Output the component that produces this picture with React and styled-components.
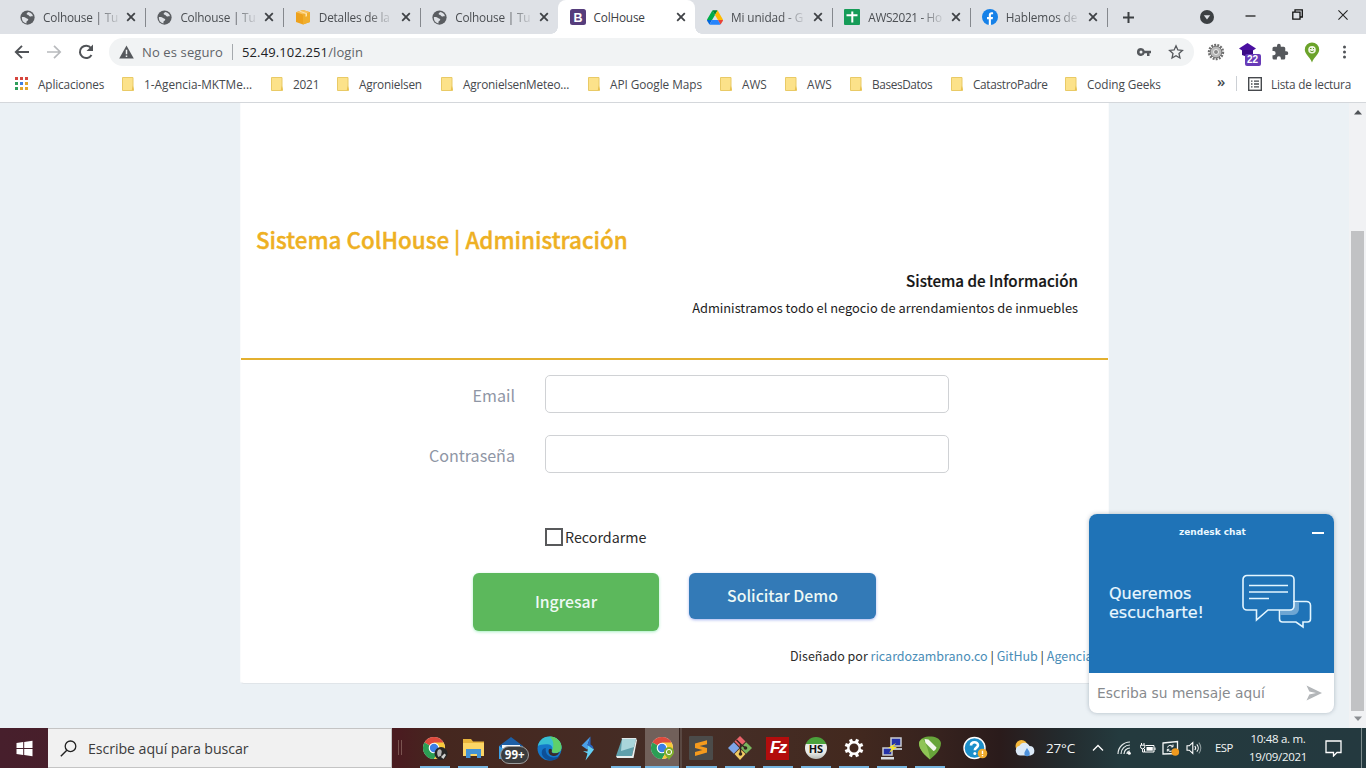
import React from "react";
import styled, { createGlobalStyle, css } from "styled-components";

const UI = `"Open Sans", "Noto Sans", sans-serif`;
const PAGE = `"Noto Sans CJK SC", "Open Sans", sans-serif`;

const Global = createGlobalStyle`
  *, *::before, *::after { box-sizing: border-box; }
  html, body { margin: 0; padding: 0; overflow: hidden; }
  body { width: 1366px; height: 768px; font-family: ${UI}; font-size: 12px; }
  svg { display: block; flex: none; }
  a { color: inherit; text-decoration: none; }
`;

const Screen = styled.div`
  position: relative;
  width: 1366px;
  height: 768px;
  display: flex;
  flex-direction: column;
  overflow: hidden;
  background: #fff;
`;

/* ---------- browser tabs ---------- */
const TabStrip = styled.div`
  height: 34px;
  flex: none;
  display: flex;
  align-items: stretch;
  padding-left: 8px;
  background: #dee1e6;
`;

const Tab = styled.div`
  position: relative;
  width: 137.4px;
  flex: none;
  display: flex;
  align-items: center;
  padding: 0 9px 0 12px;
  color: #4b4e52;
  ${(p) =>
    p.$active &&
    css`
      background: #fff;
      border-radius: 8px 8px 0 0;
      color: #3c4043;
      &::before {
        content: "";
        position: absolute;
        left: -7px;
        right: -7px;
        bottom: 0;
        height: 7px;
        background:
          radial-gradient(circle at 0 0, transparent 6.5px, #fff 7px) left / 7px 7px no-repeat,
          radial-gradient(circle at 100% 0, transparent 6.5px, #fff 7px) right / 7px 7px no-repeat;
      }
    `}
  ${(p) =>
    p.$divider &&
    css`
      &::after {
        content: "";
        position: absolute;
        right: -1px;
        top: 8px;
        width: 1px;
        height: 19px;
        background: #85888d;
      }
    `}
`;

const TabLabelBox = styled.div`
  flex: 1;
  display: flex;
  padding-left: 8px;
`;

const TabLabel = styled.span`
  white-space: nowrap;
  margin-top: -1px;
  font-size: 11.8px;
  letter-spacing: ${(p) => p.$ls || 0}px;
  ${(p) =>
    p.$fade &&
    css`
      mask-image: linear-gradient(90deg, #000 70%, rgba(0, 0, 0, 0.15) 100%);
    `}
`;

const StripTools = styled.div`
  display: flex;
  flex: 1;
  align-items: center;
  svg:nth-child(1) { margin-left: 15px; }
  svg:nth-child(2) { margin-left: 65px; }
  svg:nth-child(3) { margin-left: 31px; margin-top: -4px; }
  svg:nth-child(4) { margin-left: 36px; margin-top: -5px; }
  svg:nth-child(5) { margin-left: 34px; margin-top: -5px; }
`;

/* ---------- address bar ---------- */
const Toolbar = styled.div`
  height: 36px;
  flex: none;
  display: flex;
  align-items: center;
  padding-left: 13px;
  background: #fff;
`;

const NavButtons = styled.div`
  width: 96px;
  display: flex;
  align-items: center;
  gap: 14px;
`;

const Omnibox = styled.div`
  width: 1085px;
  height: 28px;
  border-radius: 14px;
  background: #f1f3f4;
  display: flex;
  align-items: center;
  padding: 0 10px;
`;

const Insecure = styled.span`
  width: 84px;
  margin-left: 8px;
  white-space: nowrap;
  font-size: 13px;
  letter-spacing: 0.12px;
  color: #5f6368;
`;

const OmniDivider = styled.span`
  width: 1px;
  height: 16px;
  margin: 0 9px 0 6px;
  background: #a5a9ad;
`;

const Url = styled.span`
  flex: 1;
  font-size: 13px;
  letter-spacing: 0.12px;
  color: #202124;
  i { font-style: normal; color: #5f6368; }
`;

const OmniIcons = styled.div`
  display: flex;
  align-items: center;
  gap: 16px;
`;

const Extensions = styled.div`
  display: flex;
  align-items: center;
  gap: 13.5px;
  margin-left: 13px;
`;

const ExtBadge = styled.div`
  position: relative;
  width: 19px;
  height: 18px;
  span {
    position: absolute;
    left: 6px;
    top: 11px;
    width: 16px;
    height: 12px;
    border-radius: 2px;
    background: #673ab7;
    color: #fff;
    font: 700 10px/12px "Liberation Sans", sans-serif;
    text-align: center;
  }
`;

/* ---------- bookmarks ---------- */
const Bookmarks = styled.div`
  height: 33px;
  flex: none;
  display: flex;
  align-items: center;
  padding: 0 0 5px 15px;
  border-bottom: 1px solid #d4d7db;
  background: #fff;
`;

const Bookmark = styled.div`
  width: ${(p) => p.$w}px;
  flex: none;
  display: flex;
  align-items: center;
  gap: ${(p) => p.$gap || 10}px;
  white-space: nowrap;
  font-size: 11.8px;
  letter-spacing: ${(p) => p.$ls || 0}px;
  color: #46494d;
`;

const More = styled.span`
  width: 19px;
  font-size: 15px;
  font-weight: 600;
  line-height: 1;
  margin-top: -4px;
  color: #46494d;
`;

const BarDivider = styled.span`
  width: 1px;
  height: 15px;
  margin-right: 11px;
  background: #ccd0d5;
`;

/* ---------- web page ---------- */
const Viewport = styled.div`
  height: 625px;
  flex: none;
  display: flex;
  background: #ebf1f5;
`;

const Content = styled.main`
  flex: 1;
  padding-left: 240px;
  overflow: hidden;
  font-family: ${PAGE};
`;

const Card = styled.section`
  width: 869px;
  height: 581px;
  background: #fff;
  border: 1px solid #fafbfc;
  border-bottom-color: #e0e5e9;
  border-top: 0;
  border-radius: 0 0 4px 4px;
`;

const CardHead = styled.header`
  height: 257px;
  padding: 118px 30px 0 15px;
  border-bottom: 2px solid #e3b02f;
`;

const Title = styled.h1`
  margin: 0;
  height: 36px;
  line-height: 36px;
  font-size: 22.4px;
  font-weight: 500;
  -webkit-text-stroke: 0.4px #eeb023;
  color: #eeb023;
  white-space: nowrap;
`;

const InfoTitle = styled.h2`
  margin: 11px 0 0;
  line-height: 24px;
  font-size: 15.2px;
  font-weight: 500;
  -webkit-text-stroke: 0.2px #151515;
  text-align: right;
  color: #151515;
`;

const InfoText = styled.p`
  margin: 5px 0 0;
  line-height: 22px;
  font-size: 12.83px;
  text-align: right;
  color: #1c1c1c;
`;

const Form = styled.form`
  padding-top: 15px;
`;

const Field = styled.label`
  height: 38px;
  margin-bottom: 22px;
  display: flex;
  align-items: center;
`;

const FieldName = styled.span`
  width: 274px;
  margin-right: 30px;
  padding-top: 1px;
  text-align: right;
  font-size: 16.1px;
  color: #8f96a5;
`;

const Input = styled.input`
  width: 404px;
  height: 38px;
  border: 1px solid #d0d2d5;
  border-radius: 5px;
  background: #fff;
`;

const Remember = styled.label`
  display: flex;
  align-items: center;
  height: 20px;
  margin: 54px 0 0 304px;
  gap: 2px;
  font-size: 14.3px;
  line-height: 20px;
  color: #2b2b2b;
`;

const Check = styled.span`
  width: 18px;
  height: 18px;
  border: 2px solid #58595b;
`;

const Actions = styled.div`
  display: flex;
  align-items: flex-start;
  gap: 30px;
  margin: 26px 0 0 232px;
`;

const Button = styled.button`
  width: ${(p) => p.$w}px;
  height: ${(p) => p.$h}px;
  padding: 0 0 1px;
  border: 0;
  border-radius: 6px;
  background: ${(p) => p.$bg};
  box-shadow: 0 1px 3px ${(p) => p.$glow};
  color: #eef9f5;
  font: 500 15.8px ${PAGE};
`;

const Credits = styled.p`
  margin: 14px 0 0 549px;
  line-height: 22px;
  font-size: 12.5px;
  white-space: nowrap;
  color: #2b2b2b;
  a { color: #4a8db7; }
`;

const ScrollTrack = styled.div`
  width: 17px;
  display: flex;
  flex-direction: column;
  align-items: center;
  background: #f1f2f4;
  padding: 6px 0 6px 0;
`;

const ScrollThumb = styled.div`
  width: 13px;
  height: 480px;
  margin-top: 116px;
  margin-bottom: 5px;
  background: #c1c2c4;
`;

/* ---------- chat widget ---------- */
const Chat = styled.aside`
  position: absolute;
  left: 1089px;
  top: 514px;
  width: 245px;
  height: 199px;
  border-radius: 8px;
  overflow: hidden;
  background: #fff;
  box-shadow: 0 0 4px rgba(60, 80, 100, 0.35);
  font-family: "DejaVu Sans", sans-serif;
`;

const ChatTop = styled.div`
  height: 159px;
  background: #1f73b7;
  color: #eaf8ff;
`;

const ChatBar = styled.div`
  height: 36px;
  display: flex;
  align-items: center;
  padding: 0 10px 0 90px;
  justify-content: space-between;
  font: 700 9px "DejaVu Sans", sans-serif;
`;

const Minimize = styled.span`
  width: 12px;
  height: 2px;
  margin-top: 2px;
  background: #fff;
`;

const ChatBody = styled.div`
  display: flex;
  justify-content: space-between;
  padding: 24px 21px 0 20px;
`;

const ChatPrompt = styled.p`
  margin: 10px 0 0;
  font-size: 16px;
  line-height: 19px;
  -webkit-text-stroke: 0.2px #eaf8ff;
`;

const ChatInput = styled.div`
  height: 40px;
  display: flex;
  align-items: center;
  justify-content: space-between;
  padding: 0 12px 0 8px;
  font-size: 13.8px;
  color: #878a8e;
`;

/* ---------- taskbar ---------- */
const Taskbar = styled.footer`
  height: 40px;
  flex: none;
  display: flex;
  background: linear-gradient(90deg, #471f2c 0, #4a1c20 400px, #45271f 440px, #452e27 700px, #43291f 850px, #36221e 940px, #2a1b1b 1000px, #232a2d 1060px, #243a3e 1120px, #24393f 1366px);
`;

const StartButton = styled.div`
  width: 48px;
  display: flex;
  align-items: center;
  justify-content: center;
`;

const Search = styled.div`
  width: 344px;
  display: flex;
  align-items: center;
  gap: 11px;
  padding: 0 12px 0;
  background: #f1f1f1;
  border: 1px solid #c4c4c4;
  border-left: 0;
  font-size: 14.2px;
  letter-spacing: -0.07px;
  color: #3c3c3c;
`;

const Grip = styled.div`
  width: 4px;
  height: 15px;
  margin: 12px 14px 0 6px;
  border: solid #7a5450;
  border-width: 0 1px;
`;

const TaskItem = styled.div`
  position: relative;
  width: ${(p) => p.$w || 38.2}px;
  height: 40px;
  display: flex;
  align-items: center;
  justify-content: center;
  flex: none;
  ${(p) =>
    p.$active &&
    css`
      background: linear-gradient(90deg, #71605a 0 34px, #34231f 34px 35px, #5a4842 35px);
    `}
  ${(p) =>
    p.$open &&
    css`
      &::after {
        content: "";
        position: absolute;
        left: ${p.$active ? 0 : 4}px;
        right: ${p.$active ? 3 : 4}px;
        bottom: 0;
        height: 2px;
        background: #76b5e0;
      }
    `}
`;

const MailCount = styled.span`
  position: absolute;
  left: 8px;
  top: 18px;
  width: 29px;
  height: 18px;
  border: 1px solid #9b9c9c;
  border-radius: 9px;
  background: #3b3c3d;
  color: #fff;
  font: 700 11.5px/16px "Open Sans", sans-serif;
  text-align: center;
`;

const Disc = styled.span`
  width: 22px;
  height: 22px;
  border-radius: 50%;
  background: linear-gradient(#4aa13b 0 30%, #e9ece9 34% 70%, #b8bcb8);
  color: #111;
  font: 700 11px/23px "Open Sans", sans-serif;
  text-align: center;
`;

const Fz = styled.span`
  width: 23px;
  height: 23px;
  background: #b30d0d;
  color: #fff;
  font: italic 700 17px/22px "Liberation Sans", sans-serif;
  letter-spacing: -1.5px;
  text-align: center;
`;

const Tray = styled.div`
  display: flex;
  align-items: center;
  flex: none;
  margin-left: auto;
  color: #f2f5f5;
`;

const TraySlot = styled.div`
  width: ${(p) => p.$w}px;
  display: flex;
  flex: none;
  justify-content: center;
  text-align: center;
  white-space: nowrap;
  font-size: ${(p) => p.$fs || 12}px;
  line-height: 18px;
  letter-spacing: ${(p) => p.$ls || 0}px;
`;

const PeekLine = styled.div`
  width: 5px;
  height: 40px;
  margin-left: 8px;
  border-left: 1px solid #7d8b8d;
`;

/* ---------- icons ---------- */
const Svg = ({ w = 16, h = w, vb = `0 0 ${w} ${h}`, children }) => (
  <svg width={w} height={h} viewBox={vb} fill="none">
    {children}
  </svg>
);

const Globe = () => (
  <Svg w={15} vb="0 0 16 16">
    <circle cx="8" cy="8" r="7.6" fill="#5a5d61" />
    <path d="M2 7.4c1.9-.2 3.7.1 4.600 1.200.8.9 2.300.6 2.200 1.900-.1 1.200-1.800 1-1.900 2.300l-.1 1.500A6.400 6.400 0 0 1 2 7.400z" fill="#dee1e6" />
    <path d="M8.600 2.200c-.4.900-1.700 1-1.500 2 .2 1 1.700.7 2.300 1.600.6 1 2 1.500 2.900.9.700-.5 1.200-.3 1.700.4A6.300 6.300 0 0 0 8.600 2.200z" fill="#dee1e6" />
  </Svg>
);

const Cube = () => (
  <Svg w={16}>
    <path d="M1 3.300 8 1l7 2.300v9.800L8 15.500l-7-2.400z" fill="#eda11c" />
    <path d="M1 3.300 8 5.500l7-2.200L8 1z" fill="#f8c15c" />
    <path d="M8 5.500v10l7-2.400V3.300z" fill="#f0ae2d" />
    <path d="M5.500 1.900 12 4.200v3l-1.500.5v-3L4 2.400z" fill="#fde3ac" />
  </Svg>
);

const BootstrapB = () => (
  <Svg w={16}>
    <rect width="16" height="16" rx="2.500" fill="#563d7c" />
    <text x="8" y="12.500" textAnchor="middle" fontFamily="Liberation Sans, sans-serif" fontWeight="700" fontSize="12.500" fill="#fff">B</text>
  </Svg>
);

const Drive = () => (
  <Svg w={16} h={15} vb="0 0 87.300 78">
    <path d="m6.600 66.850 3.850 6.650c.8 1.400 1.950 2.500 3.300 3.300l13.750-23.800H0c0 1.550.4 3.100 1.200 4.500z" fill="#0066da" />
    <path d="M43.650 25 29.900 1.200c-1.350.8-2.500 1.900-3.300 3.300L1.200 48.500A9.060 9.060 0 0 0 0 53h27.500z" fill="#00ac47" />
    <path d="M73.550 76.800c1.350-.8 2.500-1.900 3.300-3.300l1.600-2.750L86.100 57.500c.8-1.400 1.200-2.950 1.200-4.500H59.800l5.850 11.500z" fill="#ea4335" />
    <path d="M43.650 25 57.400 1.200C56.050.4 54.500 0 52.900 0H34.400c-1.600 0-3.150.45-4.500 1.200z" fill="#00832d" />
    <path d="M59.800 53H27.500L13.750 76.800c1.350.8 2.900 1.200 4.500 1.200h50.800c1.600 0 3.150-.45 4.500-1.200z" fill="#2684fc" />
    <path d="m73.400 26.500-12.700-22c-.8-1.400-1.950-2.500-3.300-3.300L43.650 25 59.800 53h27.450c0-1.550-.4-3.100-1.200-4.500z" fill="#ffba00" />
  </Svg>
);

const Sheets = () => (
  <Svg w={16}>
    <rect width="16" height="16" rx="1" fill="#169c58" />
    <path d="M8.300 2.500v11M2.500 6.300h11" stroke="#fff" strokeWidth="2" />
  </Svg>
);

const Facebook = () => (
  <Svg w={16}>
    <circle cx="8" cy="8" r="8" fill="#1681e8" />
    <path d="M6.800 16V10.300H5V8h1.800V6.300c0-2 1.100-3 2.800-3 .7 0 1.300.1 1.500.1v1.900h-1c-.9 0-1.200.5-1.200 1.200V8H11l-.3 2.300H8.900V16z" fill="#fff" />
  </Svg>
);

const Cross = ({ s = 8, c = "#3f4246", t = 1.8 }) => (
  <Svg w={s + 2} vb="0 0 10 10">
    <path d="m1.200 1.200 7.600 7.600m0-7.600L1.200 8.800" stroke={c} strokeWidth={t} />
  </Svg>
);

const Folder = () => (
  <Svg w={12} h={14}>
    <path d="M.5.500h10.500v8.500l.6 4.500H.5z" fill="#fce28a" stroke="#e9ca66" />
    <path d="m9.800 13 .9-4.500.8 4.500z" fill="#e9c04d" />
  </Svg>
);

const AppsGrid = () => (
  <Svg w={13}>
    {["#d6453d", "#d6453d", "#d6453d", "#2f9e5b", "#3f7fe0", "#e2a52c", "#2f9e5b", "#e2a52c", "#e2a52c"].map((c, i) => (
      <rect key={i} x={(i % 3) * 5} y={Math.floor(i / 3) * 5} width="3" height="3" fill={c} />
    ))}
  </Svg>
);

const ChromeArt = ({ children }) => (
  <Svg w={26} h={26}>
    <circle cx="12" cy="13" r="11" fill="#e8eaec" />
    <path d="M12 13 2.470 7.500A11 11 0 0 1 21.530 7.500z" fill="#dd4a3c" />
    <path d="M2.470 7.500A11 11 0 0 0 12 24l5-8.500L12 13z" fill="#2b9e54" />
    <path d="M21.530 7.500A11 11 0 0 1 12 24l4.800-8.300L12 7.500z" fill="#f8c93a" />
    <circle cx="12" cy="13" r="5.300" fill="#fff" />
    <circle cx="12" cy="13" r="4.200" fill="#3b7fe6" />
    {children}
  </Svg>
);

const apps = [
  { w: 38, open: true, art: (
    <ChromeArt>
      <circle cx="19" cy="18.500" r="6.500" fill="#262626" />
      <path d="M15.500 16c1-2.500 4-2 4.200.3.200 2-.8 2.500-.4 4.200l-3 1.500c-1-1.500-1.500-4-.8-6z" fill="#b5b5b5" />
      <path d="m19 22 3.500-3.500 1.500 1.500-2.500 4z" fill="#cfcfcf" />
    </ChromeArt>
  ) },
  { open: true, art: (
    <Svg w={23} h={22}>
      <path d="M1 2h8l2 2.500h11V19H1z" fill="#e8b43c" />
      <path d="M1 6h21v13H1z" fill="#fbd566" />
      <path d="M4 21v-9h15v9h-4v-4H8.500v4z" fill="#4393d6" />
    </Svg>
  ) },
  { art: (
    <>
      <Svg w={26} h={24}>
        <path d="M1 10 13 1l12 9v13H1z" fill="#1c5fa6" />
        <path d="M4 9h18v13H4z" fill="#f2f7fb" />
        <path d="m1 10 12 8 12-8v13H1z" fill="#3aa0e6" />
      </Svg>
      <MailCount>99+</MailCount>
    </>
  ) },
  { art: (
    <Svg w={25} h={25}>
      <circle cx="12.500" cy="12.500" r="12" fill="#1577c9" />
      <path d="M.8 10C2.500 3.500 7 .5 12.500.5c7 0 12 5 12 10.500 0 4-3 6-6 6-2.600 0-4.300-.9-3.700-2 1.600-2.500.4-6.500-4.300-6.700C6 8 2.500 9 .8 10z" fill="#38bfd2" />
      <path d="M12.500.5c7 0 12 5 12 10.500 0 4-3 6-6 6-2.600 0-4.300-.9-3.700-2C17 11 17.500 5 12.500.5z" fill="#5fd069" />
      <path d="M8.800 12c-1 5 2.700 9.500 8 9.500 2.600 0 5-1 6.200-2-2.300 3.800-6 5-9.600 5C8 24 3.500 19.500 5 14.800 5.700 13 7 12 8.800 12z" fill="#0d4f97" />
      <path d="M14.800 15c-1.300 2.500 4.500 3.300 8 .8-1.500 3-3.600 4.500-6.300 4.300-3.600-.3-5.900-3.600-4.600-6.600.7-1.400 3.600-.8 2.900 1.500z" fill="#3b2b28" />
    </Svg>
  ) },
  { art: (
    <Svg w={16} h={25}>
      <path d="M10.500.500 1.500 9.500l5.500 4 3.500-2.500-3-2z" fill="#4b9fe8" />
      <path d="M10.500.500 7.500 9l6.500 4.500-1.500-3.500-2-1.500z" fill="#2867c5" />
      <path d="m8 9.500 6 4L5.500 24.500l2-7L3 15l4.500.5z" fill="#65d0f4" />
    </Svg>
  ) },
  { open: true, art: (
    <Svg w={24} h={23}>
      <path d="M8 2h14l-4 17H2z" fill="#5f9fab" />
      <path d="M8 2h14l-2 8-13 4z" fill="#a9d5db" />
      <path d="M7.500 2h14.500l.5-1H8z" fill="#dfe9ea" />
      <path d="m2 19 16 0 4-17 1 1-3.500 18H3z" fill="#e8efef" />
    </Svg>
  ) },
  { open: true, active: true, w: 37, art: (
    <ChromeArt>
      <path d="M19 12a5 5 0 0 1 5 5c0 3-3 4.500-5 8-2-3.500-5-5-5-8a5 5 0 0 1 5-5z" fill="#7fae2d" />
      <circle cx="19" cy="17" r="2.600" stroke="#fff" />
    </ChromeArt>
  ) },
  { w: 39, open: true, art: (
    <Svg w={24} h={24}>
      <rect width="24" height="24" rx="1" fill="#4b4b4a" />
      <path d="m6 7.500 12-3.300v4L10.500 10l7.500 2v4.500L6 20v-4l7.500-2L6 12z" fill="#f59a1d" />
    </Svg>
  ) },
  { w: 38, open: true, art: (
    <Svg w={26} h={26}>
      <path d="M13 1 7.500 6.500l5.500 5.500 5.500-5.500z" fill="#e9636a" />
      <path d="M6.800 7.200 1 13l5.800 5.800 5.600-5.800z" fill="#7da5e8" />
      <path d="M19.200 7.200 25 13l-5.800 5.800-5.600-5.800z" fill="#79b65e" />
      <path d="M13 13.600 7.500 19l5.500 6 5.500-6z" fill="#f1cb63" />
      <path d="m9.500 5 4 4v10M13.500 9l5 4" stroke="#33251f" strokeWidth="1.500" />
      <circle cx="13.500" cy="19" r="1.800" fill="#33251f" />
      <circle cx="18.500" cy="13" r="1.800" fill="#33251f" />
    </Svg>
  ) },
  { w: 38, open: true, art: <Fz>Fz</Fz> },
  { w: 38, open: true, art: <Disc>HS</Disc> },
  { w: 38, open: true, art: (
    <Svg w={20} vb="0 0 20 20">
      <circle cx="10" cy="10" r="5.700" stroke="#fff" strokeWidth="2.400" />
      {[0, 45, 90, 135, 180, 225, 270, 315].map((a) => (
        <rect key={a} x="8.400" y="0.600" width="3.200" height="3.600" fill="#fff" transform={`rotate(${a + 22.5} 10 10)`} />
      ))}
    </Svg>
  ) },
  { w: 38, open: true, art: (
    <Svg w={23} h={23}>
      <rect x="11" y="1" width="10" height="8" fill="#2432a8" stroke="#c9cdd2" strokeWidth="1.500" />
      <path d="M10 11h12v2H10z" fill="#b9bdc2" />
      <rect x="3" y="11" width="9" height="7" fill="#2432a8" stroke="#c9cdd2" strokeWidth="1.500" />
      <path d="M1 20h13v2.500H1z" fill="#d9dde0" />
      <path d="m16 6-8 5h4l-3 5 8-6h-4z" fill="#f7e52e" />
    </Svg>
  ) },
  { w: 38, open: true, art: (
    <Svg w={24} h={24}>
      <path d="M1 7C2 2 7 .500 12 .500S22 2 23 7c0 7-6 12-11 16.500C7 19 1 14 1 7z" fill="#68a53a" />
      <path d="M5 3c3 4 6 12 7 20.500C7 19 1 14 1 7c.5-2 2-3.500 4-4z" fill="#8fc455" />
      <path d="m6.500 3 4 .500 8 8c-.5 2-1.500 3-3 3.500l-8-8z" fill="#f4f7ef" />
    </Svg>
  ) },
  { w: 54, art: (
    <Svg w={25} h={24}>
      <circle cx="11.500" cy="12" r="10.500" fill="#1c8fca" stroke="#fff" strokeWidth="1.400" />
      <path d="M8 9.500c0-4.300 7-4.300 7-.3 0 2.500-3.200 2.300-3.200 5" stroke="#fff" strokeWidth="2.600" />
      <circle cx="11.800" cy="17.500" r="1.500" fill="#fff" />
      <circle cx="19.500" cy="17.500" r="4.800" fill="#efaa2c" />
      <path d="M19.500 14.800v3.200m0 1v1.300" stroke="#fff" strokeWidth="1.400" />
    </Svg>
  ) },
];

const tabs = [
  { icon: <Globe />, label: "Colhouse | Tu", divider: true, fade: true, ls: -0.2 },
  { icon: <Globe />, label: "Colhouse | Tu", divider: true, fade: true, ls: -0.2 },
  { icon: <Cube />, label: "Detalles de la", divider: true, fade: true, ls: -0.2 },
  { icon: <Globe />, label: "Colhouse | Tu", fade: true, ls: -0.2 },
  { icon: <BootstrapB />, label: "ColHouse", active: true, ls: -0.2 },
  { icon: <Drive />, label: "Mi unidad - G", divider: true, fade: true, ls: -0.1 },
  { icon: <Sheets />, label: "AWS2021 - Ho", divider: true, fade: true, ls: -0.35 },
  { icon: <Facebook />, label: "Hablemos de", divider: true, fade: true, ls: -0.1 },
];

const bookmarks = [
  ["1-Agencia-MKTMe...", 149, 0],
  ["2021", 66, -0.2],
  ["Agronielsen", 104, -0.2],
  ["AgronielsenMeteo...", 147, -0.18],
  ["API Google Maps", 132, -0.05],
  ["AWS", 65, 0],
  ["AWS", 65, 0],
  ["BasesDatos", 101, -0.38],
  ["CatastroPadre", 114, -0.32],
  ["Coding Geeks", 152, -0.1],
];

export default function App() {
  return (
    <Screen>
      <Global />
      <TabStrip>
        {tabs.map((t, i) => (
          <Tab key={i} $active={t.active} $divider={t.divider}>
            {t.icon}
            <TabLabelBox>
              <TabLabel $fade={t.fade} $ls={t.ls}>{t.label}</TabLabel>
            </TabLabelBox>
            <Cross />
          </Tab>
        ))}
        <StripTools>
          <Svg w={13}><path d="M6.500 1v11M1 6.500h11" stroke="#3c4043" strokeWidth="2" /></Svg>
          <Svg w={14}><circle cx="7" cy="7" r="7" fill="#3c4043" /><path d="M3.800 5.300h6.400L7 9.500z" fill="#dee1e6" /></Svg>
          <Svg w={11}><path d="M.5 6h10" stroke="#111" strokeWidth="1.200" /></Svg>
          <Svg w={11}><path d="M3 3V.800h7.300V8H8M.800 3.200H8v7H.800z" stroke="#111" strokeWidth="1.300" /></Svg>
          <Cross s={10} c="#222" t={0.9} />
        </StripTools>
      </TabStrip>

      <Toolbar>
        <NavButtons>
          <Svg w={18}><path d="M16 9H3m6-6.200L2.800 9 9 15.200" stroke="#505357" strokeWidth="1.900" /></Svg>
          <Svg w={18}><path d="M2 9h13M9 2.800 15.200 9 9 15.200" stroke="#b8babd" strokeWidth="1.700" /></Svg>
          <Svg w={18}><path d="M14.500 12A6.200 6.200 0 1 1 14 5" stroke="#505357" strokeWidth="2" /><path d="M16 1.500V8H9.500z" fill="#505357" /></Svg>
        </NavButtons>
        <Omnibox>
          <Svg w={15} h={14}>
            <path d="M7.500.500 14.800 13.500H.2z" fill="#55585c" />
            <path d="M7.500 4.800v4.400m0 1.300v1.600" stroke="#f1f3f4" strokeWidth="1.500" />
          </Svg>
          <Insecure>No es seguro</Insecure>
          <OmniDivider />
          <Url>52.49.102.251<i>/login</i></Url>
          <OmniIcons>
            <Svg w={15} h={10}>
              <path d="M4 1a4 4 0 1 0 3.700 5.300H10V9h2.500V6.300H14V3.700H7.700A4 4 0 0 0 4 1zm0 2.500a1.500 1.500 0 1 1 0 3 1.500 1.500 0 0 1 0-3z" fill="#55585c" fillRule="evenodd" />
            </Svg>
            <Svg w={16}>
              <path d="m8 1.800 1.850 4.150 4.550.5-3.400 3.050.95 4.500L8 11.700 4.050 14 5 9.500 1.600 6.450l4.550-.5z" stroke="#55585c" strokeWidth="1.300" />
            </Svg>
          </OmniIcons>
        </Omnibox>
        <Extensions>
          <Svg w={18}>
            <circle cx="9" cy="9" r="7" stroke="#6d6d6d" strokeWidth="2.400" strokeDasharray="1.900 1.200" />
            <circle cx="9" cy="9" r="5.800" fill="#b9b9b9" stroke="#777" />
            <circle cx="9" cy="9" r="2.500" fill="#8a8a8a" stroke="#efefef" />
          </Svg>
          <ExtBadge>
            <Svg w={17} h={14}>
              <path d="M8.500 0 17 5.500 8.500 11 0 5.500z" fill="#4a0fa0" />
              <path d="M3 7v5l5.500 2 5.500-2V7z" fill="#3b0b86" />
            </Svg>
            <span>22</span>
          </ExtBadge>
          <Svg w={18} vb="0 0 24 24">
            <path d="M20.500 11H19V7a2 2 0 0 0-2-2h-4V3.500a2.500 2.500 0 0 0-5 0V5H4a2 2 0 0 0-2 2v3.800h1.500a2.700 2.700 0 0 1 0 5.400H2V20a2 2 0 0 0 2 2h3.800v-1.500a2.700 2.700 0 0 1 5.400 0V22H17a2 2 0 0 0 2-2v-4h1.500a2.500 2.500 0 0 0 0-5z" fill="#55585c" />
          </Svg>
          <Svg w={18} h={21}>
            <path d="M9 .500a7.200 7.200 0 0 1 7.200 7.200C16.200 12 11 15 9 20.500 7 15 1.800 12 1.800 7.700A7.200 7.200 0 0 1 9 .500z" fill="#6ba32a" />
            <circle cx="9" cy="7.700" r="3.800" fill="#eef5e2" />
            <path d="M7 6.500h1.500M10 6.500h1M7.200 8.800c1 1 2.600 1 3.600 0" stroke="#5c9424" />
          </Svg>
          <Svg w={18}>
            {[4, 9, 14].map((y) => <circle key={y} cx="10.500" cy={y} r="1.500" fill="#505357" />)}
          </Svg>
        </Extensions>
      </Toolbar>

      <Bookmarks>
        <Bookmark $w={107} $ls={-0.15}><AppsGrid />Aplicaciones</Bookmark>
        {bookmarks.map(([label, w, ls], i) => (
          <Bookmark key={i} $w={w} $ls={ls}><Folder />{label}</Bookmark>
        ))}
        <More>»</More>
        <BarDivider />
        <Bookmark $w={110} $gap={9} $ls={-0.22}>
          <Svg w={14}>
            <rect x=".7" y=".7" width="12.600" height="12.600" stroke="#46494d" strokeWidth="1.400" />
            <path d="M3 4.200h1.500M3 7h1.500M3 9.800h1.500M6 4.200h5M6 7h5M6 9.800h5" stroke="#46494d" strokeWidth="1.300" />
          </Svg>
          Lista de lectura
        </Bookmark>
      </Bookmarks>

      <Viewport>
        <Content>
          <Card>
            <CardHead>
              <Title>Sistema ColHouse | Administración</Title>
              <InfoTitle>Sistema de Información</InfoTitle>
              <InfoText>Administramos todo el negocio de arrendamientos de inmuebles</InfoText>
            </CardHead>
            <Form>
              <Field><FieldName>Email</FieldName><Input type="email" /></Field>
              <Field><FieldName>Contraseña</FieldName><Input type="password" /></Field>
              <Remember><Check />Recordarme</Remember>
              <Actions>
                <Button type="button" $w={186} $h={58} $bg="#5cb85c" $glow="rgba(60,220,120,.45)">Ingresar</Button>
                <Button type="button" $w={187} $h={46} $bg="#337ab7" $glow="rgba(60,90,220,.45)">Solicitar Demo</Button>
              </Actions>
              <Credits>
                Diseñado por <a href="#r">ricardozambrano.co</a> | <a href="#g">GitHub</a> | <a href="#a">Agencia</a>
              </Credits>
            </Form>
          </Card>
        </Content>
        <ScrollTrack>
          <Svg w={8} h={6}><path d="M0 5.500 4 1l4 4.500z" fill="#505357" /></Svg>
          <ScrollThumb />
          <Svg w={8} h={6}><path d="M0 .500 4 5l4-4.500z" fill="#8b8e92" /></Svg>
        </ScrollTrack>
      </Viewport>

      <Taskbar>
        <StartButton>
          <Svg w={17}>
            <path d="M.5 3 7.200 2v6H.5zM8.200 1.900 16.500.700V8H8.200zM.5 9h6.700v6L.5 14zM8.200 9h8.300v7.300l-8.300-1.200z" fill="#fff" />
          </Svg>
        </StartButton>
        <Search>
          <Svg w={17}>
            <circle cx="10.500" cy="6.300" r="5.300" stroke="#222" strokeWidth="1.300" />
            <path d="M6.800 10.200.800 16.300" stroke="#222" strokeWidth="1.400" />
          </Svg>
          Escribe aquí para buscar
        </Search>
        <Grip />
        {apps.map((a, i) => (
          <TaskItem key={i} $w={a.w} $open={a.open} $active={a.active}>{a.art}</TaskItem>
        ))}
        <Tray>
          <TraySlot $w={26}>
            <Svg w={22} h={18}>
              <circle cx="7.500" cy="7" r="6" fill="#f4b73b" />
              <path d="M6 16.500a5 5 0 0 1-.5-9.800A5.500 5.500 0 0 1 15.500 7a4.800 4.800 0 0 1 1 9.500z" fill="#dbe9f7" />
              <path d="M13 9c2 3 2.800 4 2.800 5.500a2.700 2.700 0 0 1-5.400 0c0-1.500 1-3 2.600-5.500z" fill="#4d91dc" />
            </Svg>
          </TraySlot>
          <TraySlot $w={45} $fs={13.5} $ls={-0.2}>27°C</TraySlot>
          <TraySlot $w={29}>
            <Svg w={12} h={8}><path d="m1 6.500 5-5 5 5" stroke="#fff" strokeWidth="1.300" /></Svg>
          </TraySlot>
          <TraySlot $w={24}>
            <Svg w={14}>
              <path d="M1 13A12 12 0 0 1 13 1M4 13a9 9 0 0 1 9-9M7 13a6 6 0 0 1 6-6M10 13a3 3 0 0 1 3-3" stroke="#e5ebeb" strokeWidth="1.200" />
              <circle cx="12.300" cy="12.300" r="1.500" fill="#fff" />
            </Svg>
          </TraySlot>
          <TraySlot $w={23}>
            <Svg w={16} h={11}>
              <path d="M1.500 0v2M4 0v2M.5 2.200h4.200v1.500a2.100 2.100 0 0 1-4.200 0zM2.600 6v3h1.900" stroke="#fff" />
              <path d="M5.500 2.500h8.500v6.500H4.500V6M15 4.500v2.500" stroke="#fff" />
              <path d="M6.500 4h6.300v3.700H6.500z" fill="#fff" />
            </Svg>
          </TraySlot>
          <TraySlot $w={24}>
            <Svg w={18} h={16}>
              <path d="M1 3 15.500 1.500v12L1 14z" stroke="#f3f6f6" strokeWidth="1.300" />
              <path d="M10.800 6.500A3 3 0 0 0 5.500 7.500M5.500 9.500a3 3 0 0 0 5.300.5M11 4.500v2.300H8.800M5.300 11.500V9.300h2" stroke="#fff" />
              <circle cx="13.300" cy="12" r="3.800" fill="#f09a1e" />
            </Svg>
          </TraySlot>
          <TraySlot $w={22}>
            <Svg w={17} h={14}>
              <path d="M1 4.800h2.300L6.800 1.500v11L3.300 9.200H1z" stroke="#fff" strokeWidth="1.100" />
              <path d="M8.800 5a3 3 0 0 1 0 4M10.800 3.300a5.500 5.500 0 0 1 0 7.400" stroke="#fff" strokeWidth="1.100" />
              <path d="M12.800 1.700a8 8 0 0 1 0 10.600" stroke="#8b999b" strokeWidth="1.100" />
            </Svg>
          </TraySlot>
          <TraySlot $w={38} $fs={11.3} $ls={-0.4}>ESP</TraySlot>
          <TraySlot $w={70} $fs={11.5} $ls={-0.3}>10:48 a. m.<br />19/09/2021</TraySlot>
          <TraySlot $w={40}>
            <Svg w={17} h={17}>
              <path d="M1 1h15v11.500h-4L8.500 16v-3.500H1z" stroke="#fff" strokeWidth="1.300" />
            </Svg>
          </TraySlot>
          <PeekLine />
        </Tray>
      </Taskbar>

      <Chat>
        <ChatTop>
          <ChatBar>zendesk chat<Minimize /></ChatBar>
          <ChatBody>
            <ChatPrompt>Queremos<br />escucharte!</ChatPrompt>
            <Svg w={72} h={56}>
              <path d="M52 27.500h13.500a4 4 0 0 1 4 4v13.500a3 3 0 0 1-3 3H62V53l-7-5H41.500a3 3 0 0 1-3-3V36" stroke="#e4f6ff" strokeWidth="1.600" />
              <path d="M39 36h9a4 4 0 0 0 4-4v-4h6v7a6 6 0 0 1-6 6H39z" fill="#6ea6d3" />
              <path d="M6 1.500h43a4 4 0 0 1 4 4V32a4 4 0 0 1-4 4H27L15.500 46V36H6a4 4 0 0 1-4-4V5.500a4 4 0 0 1 4-4z" stroke="#e4f6ff" strokeWidth="1.600" />
              <path d="M8 11.500h39M8 18h39M8 24.500h20" stroke="#e4f6ff" strokeWidth="1.600" />
            </Svg>
          </ChatBody>
        </ChatTop>
        <ChatInput>
          Escriba su mensaje aquí
          <Svg w={16} h={16}><path d="M.5.500 16 8 .5 15.500l2.800-6L10 8 3.300 6.500z" fill="#b3b6b9" /></Svg>
        </ChatInput>
      </Chat>
    </Screen>
  );
}
